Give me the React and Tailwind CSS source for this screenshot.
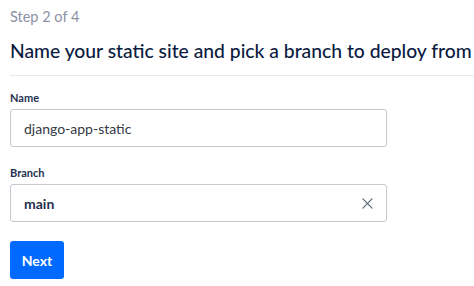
import React from "react";

export default function App() {
  return (
    <div className="w-[474px] h-[286px] bg-white overflow-hidden font-['Lato','Liberation_Sans',Arial,sans-serif]">
      <div className="pl-[10px] pt-[8px]">
        <div className="text-[14.5px] leading-[18px] text-[#8a91a3]">Step 2 of 4</div>
        <h1 className="mt-[13px] text-[19.3px] leading-[24px] font-medium text-[#0b1b3f] whitespace-nowrap">
          Name your static site and pick a branch to deploy from
        </h1>
        <div className="mt-[12px] h-px bg-[#e6e9ee]" />
        <div className="w-[377px]">
          <label className="block mt-[15px] text-[11px] leading-[14px] font-bold text-[#24314f]">Name</label>
          <div className="mt-[4px] h-[38px] rounded-[3px] border border-[#c4c9d2] flex items-center px-[13px] text-[14px] text-[#333a45]">
            django-app-static
          </div>
          <label className="block mt-[19px] text-[11px] leading-[14px] font-bold text-[#24314f]">Branch</label>
          <div className="mt-[4px] h-[38px] rounded-[3px] border border-[#c4c9d2] flex items-center justify-between pl-[13px] pr-[13px] text-[14px] font-bold text-[#24314f]">
            <span>main</span>
            <svg width="11" height="11" viewBox="0 0 12 12" fill="none" stroke="#5b6478" strokeWidth="1.3" strokeLinecap="round">
              <path d="M1 1L11 11M11 1L1 11" />
            </svg>
          </div>
          <button className="mt-[19px] w-[54px] h-[38px] rounded-[3px] bg-[#0069ff] text-white text-[14px] font-bold">
            Next
          </button>
        </div>
      </div>
    </div>
  );
}
